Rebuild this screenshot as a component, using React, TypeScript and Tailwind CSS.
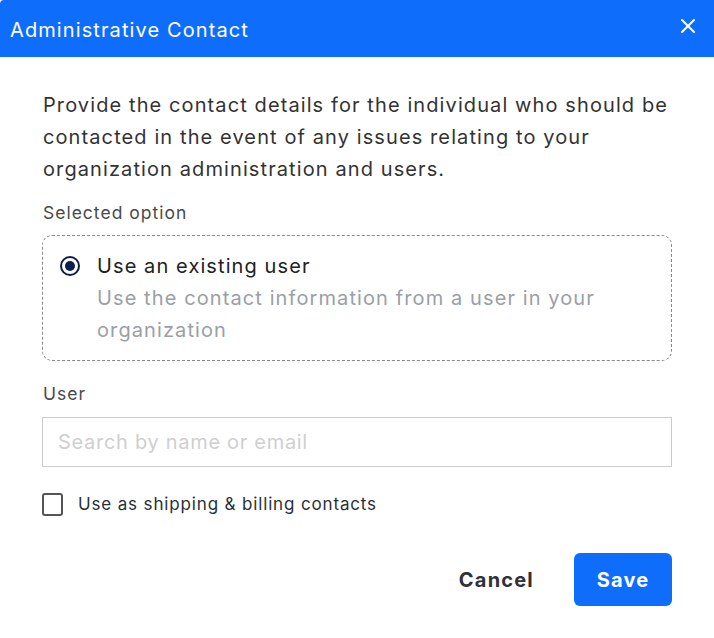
import { X } from "lucide-react"

export default function App() {
  return (
    <div className="h-[638px] w-[714px] overflow-hidden bg-white font-['Inter',sans-serif]">
      <div className="flex h-[57px] items-center justify-between rounded-tl-[4px] bg-[#0f6dfb] pt-[3px] pl-[10px] pr-[14px] text-white">
        <h1 className="text-[20px] font-normal leading-none tracking-[1.1px]">Administrative Contact</h1>
        <button type="button" aria-label="Close" className="mb-[8px] flex h-6 w-6 items-center justify-center">
          <X size={24} strokeWidth={2} />
        </button>
      </div>

      <div className="px-[42px]">
        <p className="pt-[32px] pl-px text-[20px] leading-[32px] tracking-[1.1px] text-[#333333]">
          Provide the contact details for the individual who should be contacted in the event of
          any issues relating to your organization administration and users.
        </p>

        <p className="mt-[16px] pl-px text-[17.5px] leading-[24px] tracking-[1px] text-[#4a4a4a]">
          Selected option
        </p>

        <label className="mt-[10px] flex gap-[17px] rounded-[10px] border border-dashed border-[#8a8a8a] px-[17px] py-[14px]">
          <span className="mt-[6px] flex h-[20px] w-[20px] shrink-0 items-center justify-center rounded-full border-2 border-[#0b1f4d]">
            <span className="h-[10px] w-[10px] rounded-full bg-[#0b1f4d]" />
          </span>
          <span className="flex flex-col text-[20px] leading-[32px] tracking-[1.1px]">
            <span className="text-[#222222]">Use an existing user</span>
            <span className="text-[#9aa0a6]">
              Use the contact information from a user in your organization
            </span>
          </span>
        </label>

        <p className="mt-[21px] pl-px text-[17.5px] leading-[24px] tracking-[1px] text-[#4a4a4a]">User</p>

        <input
          type="text"
          placeholder="Search by name or email"
          className="mt-[11px] h-[50px] w-full border border-[#cccccc] px-[15px] text-[20px] tracking-[0.7px] text-[#333333] outline-none placeholder:text-[#cfcfcf]"
        />

        <label className="mt-[25px] flex items-center gap-[15px]">
          <span className="h-[23px] w-[21px] rounded-[3px] border-2 border-[#555555]" />
          <span className="text-[17px] leading-[24px] tracking-[0.85px] text-[#2a2f36]">
            Use as shipping &amp; billing contacts
          </span>
        </label>

        <div className="mt-[37px] flex justify-end gap-[20px]">
          <button type="button" className="h-[53px] px-[20px] text-[20px] font-bold tracking-[1.2px] text-[#2f3338]">
            Cancel
          </button>
          <button
            type="button"
            className="h-[53px] w-[98px] rounded-[6px] bg-[#0f6dfb] text-[20px] font-bold tracking-[1.2px] text-white"
          >
            Save
          </button>
        </div>
      </div>
    </div>
  )
}
